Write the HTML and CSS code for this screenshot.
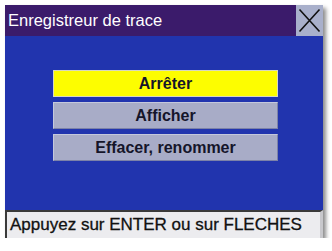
FILE: index.html
```html
<!DOCTYPE html>
<html>
<head>
<meta charset="utf-8">
<link rel="stylesheet" href="styles.css">
</head>
<body>
<div class="window">
  <div class="titlebar">
    <div class="title">Enregistreur de trace</div>
    <div class="close">
      <svg width="27" height="31" viewBox="0 0 27 31"><path d="M3.5 4.5 L23.5 26.5 M23.5 4.5 L3.5 26.5" stroke="#111" stroke-width="1.6" fill="none"/></svg>
    </div>
  </div>
  <div class="content">
    <div class="menu">
      <div class="btn active">Arrêter</div>
      <div class="btn">Afficher</div>
      <div class="btn">Effacer, renommer</div>
    </div>
  </div>
  <div class="status">Appuyez sur ENTER ou sur FLECHES</div>
</div>
</body>
</html>
```
FILE: styles.css
```css
html, body { margin: 0; padding: 0; background: #fff; }
body { font-family: "Liberation Sans", Arial, sans-serif; }
.window {
  margin: 5px 0 0 5px;
  width: 318px;
  box-shadow: 3px 3px 4px rgba(0,0,0,0.45);
}
.titlebar {
  display: flex;
  height: 31px;
  background: #3b1b6b;
}
.title {
  flex: 1;
  color: #fff;
  font-size: 16.5px;
  line-height: 31px;
  padding-left: 3px;
}
.close {
  width: 27px;
  background: #a9b0cb;
}
.close svg { display: block; }
.content {
  background: #2134ae;
  height: 174px;
  padding-top: 34px;
  box-sizing: border-box;
}
.menu {
  margin-left: 48px;
  width: 225px;
  display: flex;
  flex-direction: column;
  gap: 5px;
}
.btn {
  height: 27px;
  box-sizing: border-box;
  background: #a8acc7;
  border: 1px solid #c4c8dc;
  border-right-color: #7c82a8;
  border-bottom-color: #7c82a8;
  color: #15152a;
  font-weight: bold;
  font-size: 16px;
  text-align: center;
  line-height: 25px;
}
.btn.active { background: #fdfd00; border-color: #d8d8c0; }
.status {
  height: 28px;
  box-sizing: border-box;
  background: #ececef;
  border-top: 2px solid #3a3a3a;
  border-left: 2px solid #3a3a3a;
  border-right: 3px solid #c8c8cc;
  color: #111;
  font-size: 17px;
  line-height: 26px;
  padding-left: 3px;
  -webkit-text-stroke: 0.3px #111;
}
```
